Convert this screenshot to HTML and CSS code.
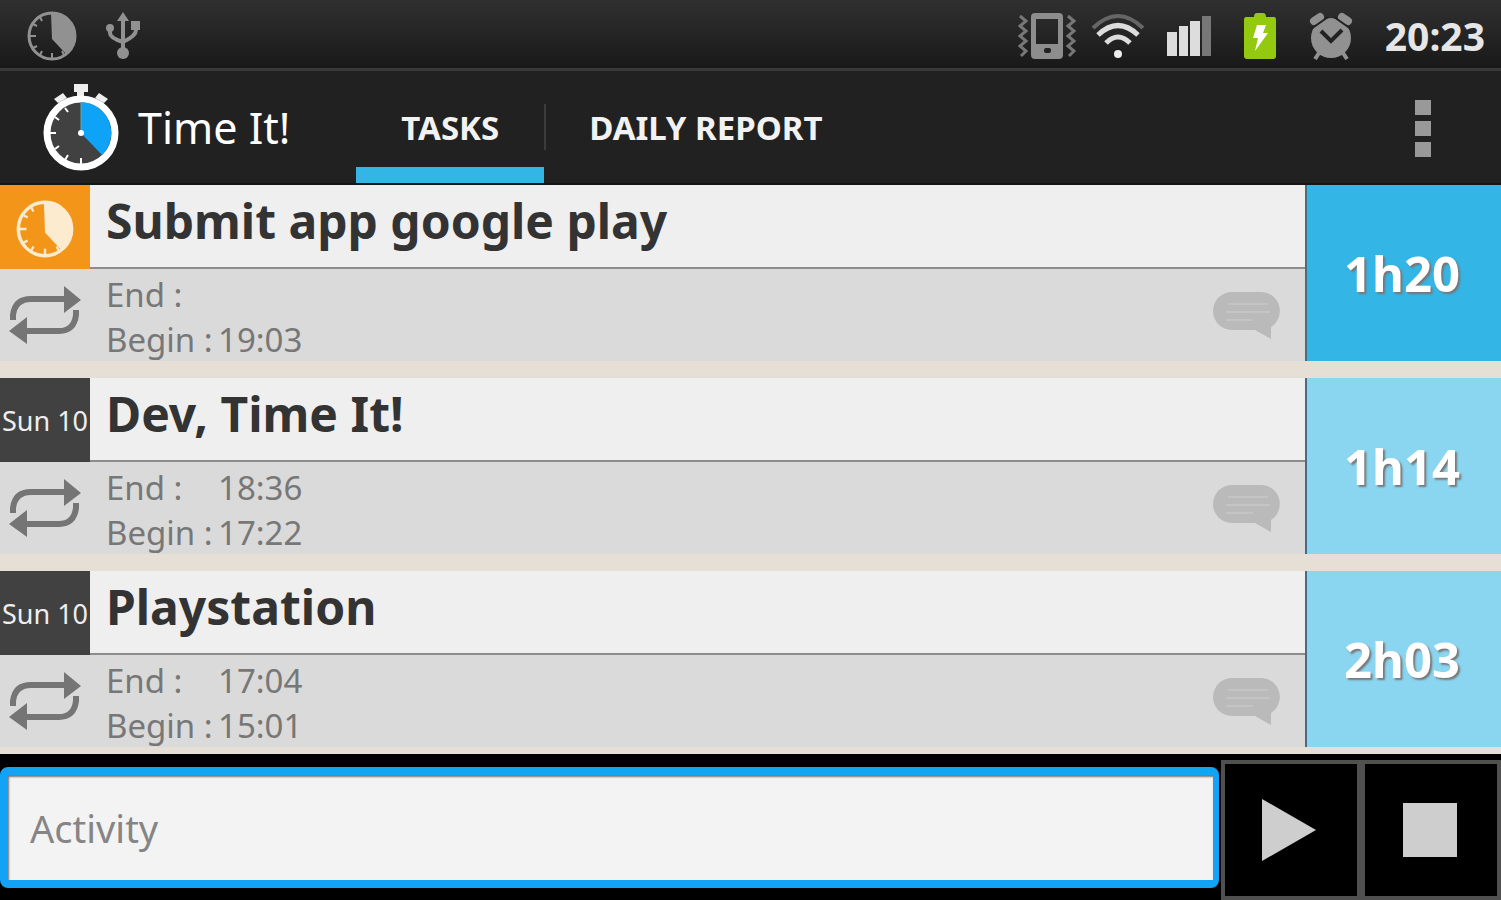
FILE: index.html
```html
<!DOCTYPE html>
<html lang="en">
<head>
    <meta charset="UTF-8">
    <title>Time It!</title>
    <link rel="stylesheet" href="styles.css">
</head>
<body>
    <!-- shared icons -->
    <svg class="defs" width="0" height="0">
        <symbol id="clock" viewBox="0 0 50 50">
            <circle cx="25" cy="25" r="23" fill="none" stroke="currentColor" stroke-width="3"/>
            <path d="M24 2A23 23 0 0 1 39 43L25 28Z" fill="currentColor"/>
            <path d="M25 42v6M2 25h7M13 6l2 4M6 13l4 2M6 37l4-2M13 44l2-4M37 44l-2-4" stroke="currentColor" stroke-width="2"/>
        </symbol>
        <symbol id="repeat" viewBox="0 0 72 58">
            <path d="M4 34V29Q6 13 22 13H56M67 24V29Q65 45 50 45H16" fill="none" stroke="currentColor" stroke-width="6"/>
            <path d="M55 0L72 14L55 27ZM18 31L0 45L18 58Z" fill="currentColor"/>
        </symbol>
        <symbol id="comment" viewBox="0 0 68 47">
            <path d="M19 0H49A19 19 0 0 1 58 35V47L42 38H19A19 19 0 0 1 19 0Z" fill="#bababa"/>
            <path d="M15 12H55M13 20H57M13 28H40" stroke="#c4c4c4" stroke-width="2"/>
        </symbol>
    </svg>

    <div class="status">
        <span class="cell"><svg width="50" height="50"><use href="#clock"/></svg></span>
        <span class="cell">
            <svg width="34" height="50" viewBox="0 0 34 50">
                <g fill="none" stroke="#919191" stroke-width="4">
                    <path d="M17 8V42M4 17V22Q4 27 17 31M30 13V19Q30 25 17 31"/>
                </g>
                <path d="M17 1L23 10H11ZM25 10h9v9h-9Z" fill="#919191"/>
                <circle cx="4" cy="17" r="4" fill="#919191"/>
                <circle cx="17" cy="42" r="6" fill="#919191"/>
            </svg>
        </span>
        <div class="right">
            <span class="cell">
                <svg width="58" height="46" viewBox="0 0 58 46">
                    <path d="M13 4Q13 0 17 0H41Q45 0 45 4V42Q45 46 41 46H17Q13 46 13 42ZM18 6V31H40V6Z" fill="#8d8d8d" fill-rule="evenodd"/>
                    <rect x="26" y="35" width="7" height="5" rx="2" fill="#222"/>
                    <path d="M2 3l6 5-6 5 6 5-6 5 6 5-6 5 6 5-5 5M50 3l6 5-6 5 6 5-6 5 6 5-6 5 6 5-5 5" fill="none" stroke="#777" stroke-width="3"/>
                </svg>
            </span>
            <span class="cell">
                <svg width="54" height="46" viewBox="0 0 54 46">
                    <g fill="none">
                        <path d="M2 15Q27-9 52 15" stroke="#666" stroke-width="4"/>
                        <path d="M7 22Q27 3 47 22" stroke="#ddd" stroke-width="5"/>
                        <path d="M15 30Q27 18 39 30" stroke="#ddd" stroke-width="5"/>
                    </g>
                    <circle cx="27" cy="41" r="4" fill="#eee"/>
                </svg>
            </span>
            <span class="cell">
                <svg width="44" height="40" viewBox="0 0 44 40">
                    <path d="M0 16h10v24H0ZM12 10h9v30h-9ZM23 5h10v35H23Z" fill="#ddd"/>
                    <path d="M35 0h9v40h-9Z" fill="#777"/>
                </svg>
            </span>
            <span class="cell">
                <svg width="32" height="46" viewBox="0 0 32 46">
                    <path d="M2 4H10Q10 0 13 0H19Q22 0 22 4H30Q32 4 32 7V43Q32 46 29 46H3Q0 46 0 43V7Q0 4 2 4Z" fill="#93c90e"/>
                    <path d="M13 12H22L19 20H24L11 38L14 25H9Z" fill="#fff"/>
                </svg>
            </span>
            <span class="cell">
                <svg width="44" height="48" viewBox="0 0 44 48">
                    <circle cx="22" cy="26" r="20" fill="#919191"/>
                    <path d="M5 9L11 5M39 9L33 5" stroke="#919191" stroke-width="8" stroke-linecap="round"/>
                    <path d="M2 17L19 5M42 17L25 5" stroke="#222" stroke-width="2"/>
                    <path d="M10 41L6 47M34 41L38 47" stroke="#919191" stroke-width="4"/>
                    <path d="M12 19L22 29L33 18" fill="none" stroke="#222" stroke-width="4"/>
                </svg>
            </span>
            <span class="time">20:23</span>
        </div>
    </div>

    <header class="bar">
        <svg class="logo" width="78" height="90" viewBox="0 0 78 90">
            <path d="M32 2H46V10H42V16H35V10H32ZM12 17L21 11L25 16L16 21ZM66 17L57 11L53 16L62 21Z" fill="#eee"/>
            <circle cx="39" cy="51" r="34" fill="#414141" stroke="#fff" stroke-width="7"/>
            <path d="M39 20A31 31 0 0 1 60 73L39 51Z" fill="#0fa3f8"/>
            <path d="M39 20V51" stroke="#6aa" stroke-width="1"/>
            <path d="M39 76v8M8 51h6M23 26l3 4M13 35l4 3M13 67l4-3M23 78l3-5" stroke="#fff" stroke-width="2"/>
            <circle cx="39" cy="51" r="3" fill="#fff"/>
        </svg>
        <h1>Time It!</h1>
        <nav class="tabs">
            <a href="#tasks" class="current">TASKS</a>
            <a href="#report">DAILY REPORT</a>
        </nav>
        <button class="menu" aria-label="Menu">
            <svg width="16" height="58" viewBox="0 0 16 58"><path d="M0 0h16v15H0ZM0 21h16v15H0ZM0 42h16v15H0Z" fill="#999"/></svg>
        </button>
    </header>

    <main class="list">
        <article class="task running">
            <div class="day"><svg width="58" height="58"><use href="#clock"/></svg></div>
            <h2>Submit app google play</h2>
            <button class="again" aria-label="Restart"><svg width="72" height="58"><use href="#repeat"/></svg></button>
            <div class="detail">
                <dl>
                    <dt>End :</dt><dd></dd>
                    <dt>Begin :</dt><dd>19:03</dd>
                </dl>
                <button class="note" aria-label="Comment"><svg width="68" height="47"><use href="#comment"/></svg></button>
            </div>
            <div class="spent">1h20</div>
        </article>
        <article class="task">
            <div class="day">Sun 10</div>
            <h2>Dev, Time It!</h2>
            <button class="again" aria-label="Restart"><svg width="72" height="58"><use href="#repeat"/></svg></button>
            <div class="detail">
                <dl>
                    <dt>End :</dt><dd>18:36</dd>
                    <dt>Begin :</dt><dd>17:22</dd>
                </dl>
                <button class="note" aria-label="Comment"><svg width="68" height="47"><use href="#comment"/></svg></button>
            </div>
            <div class="spent">1h14</div>
        </article>
        <article class="task">
            <div class="day">Sun 10</div>
            <h2>Playstation</h2>
            <button class="again" aria-label="Restart"><svg width="72" height="58"><use href="#repeat"/></svg></button>
            <div class="detail">
                <dl>
                    <dt>End :</dt><dd>17:04</dd>
                    <dt>Begin :</dt><dd>15:01</dd>
                </dl>
                <button class="note" aria-label="Comment"><svg width="68" height="47"><use href="#comment"/></svg></button>
            </div>
            <div class="spent">2h03</div>
        </article>
    </main>

    <form class="entry">
        <input type="text" placeholder="Activity" aria-label="Activity">
        <button type="button" aria-label="Start"><svg width="56" height="62" viewBox="0 0 56 62"><path d="M0 0L54 31L0 62Z" fill="#cecece"/></svg></button>
        <button type="button" aria-label="Stop"><svg width="54" height="54" viewBox="0 0 54 54"><path d="M0 0h54v54H0Z" fill="#cecece"/></svg></button>
    </form>
</body>
</html>
```
FILE: styles.css
```css
* {
    margin: 0;
    padding: 0;
    box-sizing: border-box;
}

body {
    min-height: 100vh;
    display: flex;
    flex-direction: column;
    background-color: #000;
    font-family: "Noto Sans", "Open Sans", sans-serif;
}

svg {
    display: block;
}

button {
    display: flex;
    align-items: center;
    justify-content: center;
    border: none;
    background: none;
    cursor: pointer;
}

.defs {
    position: absolute;
}

/* status bar */
.status {
    height: 71px;
    padding: 4px 16px 0;
    display: flex;
    align-items: center;
    background: linear-gradient(#303030, #191919);
    border-bottom: 3px solid #393939;
    color: #919191;
}

.cell {
    width: 71px;
    display: flex;
    justify-content: center;
}

.right {
    margin-left: auto;
    display: flex;
    align-items: center;
}

.time {
    margin-left: 18px;
    color: #e6e6e6;
    font-size: 39px;
    font-weight: bold;
    line-height: 48px;
}

/* action bar */
.bar {
    height: 114px;
    padding-left: 42px;
    display: flex;
    align-items: center;
    background-color: #212121;
    border-bottom: 2px solid #151515;
    color: #fff;
}

.bar h1 {
    margin-left: 18px;
    font-size: 43px;
    font-weight: normal;
}

.tabs {
    align-self: stretch;
    margin-left: 66px;
    display: flex;
}

.tabs a {
    padding: 0 45px;
    display: flex;
    align-items: center;
    border-top: 16px solid transparent;
    border-bottom: 16px solid transparent;
    color: #f2f2f2;
    font-size: 33px;
    font-weight: bold;
    text-decoration: none;
}

.tabs .current {
    border-bottom-color: #33b5e5;
}

.tabs a + a {
    background: linear-gradient(#3c3c3c, #3c3c3c) left center / 2px 46px no-repeat;
}

.menu {
    width: 156px;
    padding-top: 3px;
    align-self: stretch;
    margin-left: auto;
}

/* tasks */
.list {
    flex: 1;
    background-color: #e6dfd6;
}

.task {
    margin-bottom: 17px;
    display: grid;
    grid-template-columns: 90px 1fr 196px;
    grid-template-rows: 84px 92px;
    background-color: #dadada;
}

.task:last-child {
    margin-bottom: 7px;
}

.day {
    display: flex;
    align-items: center;
    justify-content: center;
    background-color: #414141;
    color: #eee;
    font-size: 27px;
    white-space: nowrap;
}

.running .day {
    padding-top: 4px;
    background-color: #f39519;
    color: #fdebd0;
}

.task h2 {
    padding-left: 16px;
    background-color: #efefef;
    border-bottom: 2px solid #8c8c8c;
    color: #333;
    font-size: 48px;
    line-height: 72px;
}

.again {
    grid-row: 2;
    color: #757575;
}

.detail {
    padding: 0 24px 0 16px;
    display: flex;
    align-items: center;
    justify-content: space-between;
}

.detail dl {
    padding-top: 4px;
    display: grid;
    grid-template-columns: 112px auto;
    color: #777;
    font-size: 33px;
    line-height: 45px;
    white-space: nowrap;
}

.spent {
    padding-right: 4px;
    grid-column: 3;
    grid-row: 1 / 3;
    display: flex;
    align-items: center;
    justify-content: center;
    background-color: #8ad5f0;
    border-left: 2px solid #4e6a7d;
    color: #fff;
    font-size: 49px;
    font-weight: bold;
    text-shadow: 2px 2px 2px #777;
}

.running .spent {
    background-color: #33b5e5;
}

/* entry bar */
.entry {
    padding-top: 6px;
    display: flex;
    align-items: flex-start;
}

.entry input {
    flex: 1;
    min-width: 0;
    height: 121px;
    margin: 7px 2px 0 0;
    padding: 0 22px;
    border: 8px solid #12a2f6;
    border-right-width: 6px;
    border-radius: 8px;
    outline: none;
    background-color: #f3f3f3;
    box-shadow: inset 1px 2px 2px #777;
    font-family: inherit;
    font-size: 38px;
}

.entry input::placeholder {
    color: #858585;
    opacity: 1;
}

.entry button {
    width: 140px;
    height: 140px;
    padding-right: 3px;
    border: 4px solid #505050;
}
```
